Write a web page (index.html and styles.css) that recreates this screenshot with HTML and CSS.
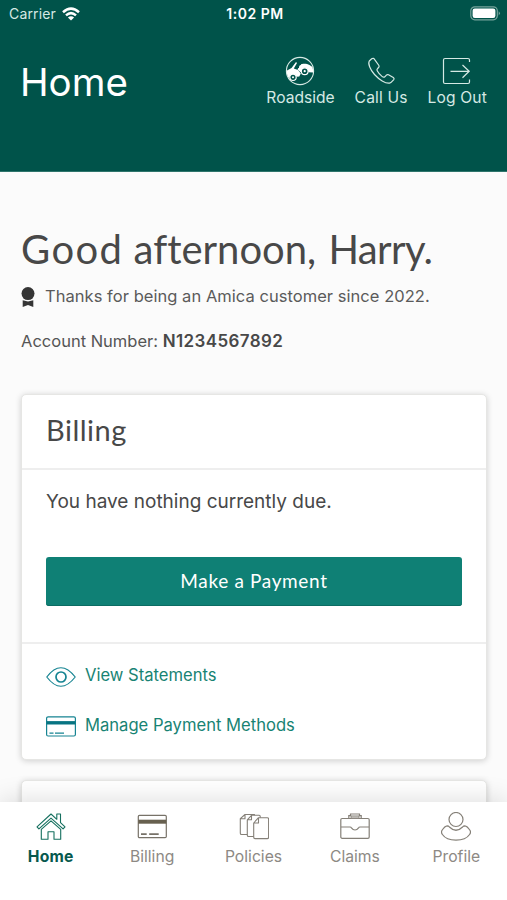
FILE: index.html
```html
<!DOCTYPE html>
<html lang="en">
<head>
<meta charset="utf-8">
<meta name="viewport" content="width=device-width, initial-scale=1">
<title>Home</title>
<link rel="stylesheet" href="styles.css">
</head>
<body>
<div class="app">
  <header class="header">
    <div class="status">
      <div class="carrier"><span class="carrier-name">Carrier</span>
        <svg class="wifi" width="18" height="14" viewBox="0 0 18 14" fill="none" stroke="#fff" stroke-width="2.500"><path d="M1 5.200Q9-2 17 5.200M4 8.400q5-4.500 10 0"/><path d="M9 13.500 5.900 10.400q3.100-2.300 6.200 0z" fill="#fff" stroke="none"/></svg>
      </div>
      <span class="clock">1:02 PM</span>
      <svg class="battery" width="31" height="15" viewBox="0 0 31 15"><rect x=".8" y=".8" width="26.500" height="13" rx="4" fill="none" stroke="#76a49c" stroke-width="1.200"/><rect x="2.600" y="2.600" width="22.800" height="9.400" rx="2.200" fill="#fff"/><path d="M28.700 5.200q2.400 2.100 0 4.300z" fill="#76a49c"/></svg>
    </div>
    <div class="topbar">
      <h1 class="title">Home</h1>
      <nav class="actions">
        <a class="action roadside">
          <svg width="30" height="30" viewBox="0 0 30 30"><circle cx="15" cy="15" r="13.600" fill="none" stroke="#d5e9e4" stroke-width="1.100"/><path d="M2 14.500 6.500 12 11 6l1 1-3.200 5.500 4.200 1.400 2.800 3.600-1.500 3-2.500.2a4 4 0 0 0-7.500 1.800C2.400 20.500 1.500 17.500 2 14.500z" fill="#fff"/><path d="M12.500 13.500l2.500-4.500c3-2 7-1 9.500 0l3 2 1 5.500-4.800-.2a4.300 4.300 0 0 0-8-.1z" fill="#fff"/><path d="M13.500 12V7.800l2.500 1" fill="none" stroke="#00534a"/><circle cx="8" cy="21.300" r="3.200" fill="#00534a" stroke="#fff" stroke-width="1.200"/><circle cx="8" cy="21.300" r="1" fill="#fff"/><circle cx="19.700" cy="15.200" r="3.400" fill="#00534a" stroke="#fff" stroke-width="1.200"/><circle cx="19.700" cy="15.200" r="1.100" fill="#fff"/></svg>
          <span>Roadside</span>
        </a>
        <a class="action call">
          <svg width="30" height="30" viewBox="0 0 30 30" fill="none" stroke="#d5e9e4" stroke-width="1.200" stroke-linejoin="round"><path d="M5.700 2.800 3.300 5C1.700 7.500 4 13.500 8.500 18.500s11 9.200 15 8.600c1.500-.3 3-2 4.300-3.500.5-.8.2-1.500-.5-2l-4.800-2.800c-.8-.4-1.500-.2-2.100.4l-1.600 1.600c-.8.700-1.800.4-2.800-.4-2.100-1.700-3.800-3.700-4.800-5.600-.5-1-.3-1.700.4-2.300l1-1c.6-.6.700-1.200.3-2L8.700 3.600c-.8-1.400-1.800-1.700-3-.8z"/></svg>
          <span>Call Us</span>
        </a>
        <a class="action logout">
          <svg width="30" height="30" viewBox="0 0 30 30" fill="none" stroke="#d5e9e4" stroke-width="1.200"><path d="M27.500 6V4q0-1.500-1.500-1.500H3Q1.500 2.500 1.500 4v22Q1.500 27.500 3 27.500h23q1.500 0 1.500-1.500v-2.500M8.500 15.300H27M20.500 9l6.700 6.300-6.700 6.400"/></svg>
          <span>Log Out</span>
        </a>
      </nav>
    </div>
  </header>
  <main class="content">
    <h2 class="greeting"><span class="salute">Good</span> <span class="daypart">afternoon,</span> <span class="name">Harry.</span></h2>
    <p class="thanks"><svg width="14" height="20" viewBox="0 0 14 20" fill="#353535"><circle cx="7" cy="6.600" r="6.500"/><path d="M1.700 13.300 7 14.500l5.300-1.200V20L7 18l-5.300 2z"/></svg><span class="thanks-text">Thanks for being an Amica customer since 2022.</span></p>
    <p class="account"><span class="acct-label">Account Number:</span> <b class="acct-num">N1234567892</b></p>
    <section class="card">
      <h3 class="card-title"><span>Billing</span></h3>
      <div class="card-body">
        <p class="due">You have nothing currently due.</p>
        <button class="pay"><span>Make a Payment</span></button>
      </div>
      <div class="links">
        <a class="link statements"><svg width="30" height="20" viewBox="0 0 30 20" fill="none" stroke="#168492"><path d="M.8 10Q14.800-8.500 29.200 10 14.800 28.500.8 10z" stroke-width="1.200"/><circle cx="15" cy="10" r="5" stroke-width="1.700"/></svg><span>View Statements</span></a>
        <a class="link methods"><svg width="30" height="21" viewBox="0 0 30 21" fill="none" stroke="#168492"><rect x=".6" y=".8" width="28.800" height="19.200" rx="1.500" stroke-width="1.200"/><path d="M.6 6.800h28.800" stroke-width="3.400" stroke="#087482"/><path d="M3.500 17.200h4M9 17.200h9" stroke-width="1.300"/></svg><span>Manage Payment Methods</span></a>
      </div>
    </section>
    <section class="card next"></section>
  </main>
  <nav class="tabs">
    <a class="tab active home"><svg width="30" height="30" viewBox="0 0 30 30" fill="none" stroke="#16705f" stroke-width="1.100" stroke-linejoin="round"><path d="M15 2 1 14.800l1.900 2.100L15 6.100l12.100 10.800 1.900-2.100-4.500-4.200V2h-3.700v5.300z"/><path d="M5.300 17.300v9.900h6.700v-7.500h6v7.500h6.700v-9.900L15 8.800z"/></svg><span>Home</span></a>
    <a class="tab billing"><svg width="30" height="30" viewBox="0 0 30 30" fill="none" stroke="#777268"><rect x="1.300" y="3.300" width="28" height="22.300" rx="1.200" stroke-width="1.200"/><path d="M1.300 9.700h28" stroke-width="4" stroke="#67604f"/><path d="M4 22.200h5.700M12.200 22.200h9.500" stroke-width="1.700"/></svg><span>Billing</span></a>
    <a class="tab policies"><svg width="30" height="30" viewBox="0 0 30 30" fill="#fff" stroke="#858078" stroke-width="1.100" stroke-linejoin="round"><path d="M6 2.500h9.500v20H2.600q-1.300 0-1.300-1.300V6.700zM6 2.500v4.200H1.300"/><path d="M12.500 3.300h7.700q1 0 1 1v20.200H9.600q-1.300 0-1.300-1.300V7.800zM12.500 3.300v4.500H8.300"/><path d="M19.500 5.700h8.800q1.300 0 1.300 1.300v18.300q0 1.300-1.300 1.300H16q-1.300 0-1.300-1.300V11zM19.500 5.700V11h-4.800"/></svg><span>Policies</span></a>
    <a class="tab claims"><svg width="30" height="30" viewBox="0 0 30 30" fill="none" stroke="#858078" stroke-width="1.200"><rect x=".8" y="6.500" width="28.400" height="19.800" rx="1.300"/><path d="M8.800 6.500V3.700h1.700V2h9v1.700h1.700v2.800"/><path d="M11 6.300V3.900h8v2.400z" fill="#c9c6c2" stroke-width=".8"/><path d="M1 15h9q1 0 1.700 1.200 1.200 1.800 3.300 1.800t3.300-1.800Q19 15 20 15h9"/></svg><span>Claims</span></a>
    <a class="tab profile"><svg width="30" height="30" viewBox="0 0 30 30" fill="none" stroke="#858078" stroke-width="1.200"><circle cx="15" cy="7.500" r="7"/><path d="M6.200 13.800C4 14 2.500 16 .9 18.500c-.6 1.200-.4 2.800.5 4C6.500 30 23.500 30 28.600 22.500c.9-1.200 1.100-2.800.5-4-1.600-2.500-3.100-4.500-5.300-4.700q-1.300 0-2.200 1.200-6.600 6.500-13.200 0-.9-1.200-2.200-1.200z"/></svg><span>Profile</span></a>
  </nav>
</div>
</body>
</html>
```
FILE: styles.css
```css
* { box-sizing: border-box; }
body, h1, h2, h3, p { margin: 0; font-weight: 400; }
body { font-family: Inter, "Liberation Sans", sans-serif; color: #484848; background: #fbfbfb; }
svg { display: block; flex: none; }
.app { height: 900px; overflow: hidden; display: flex; flex-direction: column; white-space: nowrap; }

.header { height: 172px; flex: none; background: #00534a; color: #fff; border-bottom: 1px solid #2f756c; }
.status { height: 27px; display: grid; grid-template-columns: 1fr auto 1fr; align-items: center; padding: 0 6px 0 9px; }
.carrier { display: flex; align-items: center; gap: 6px; font-size: 14px; color: #d5e9e4; letter-spacing: .15px; }
.clock { font-size: 14px; font-weight: 600; letter-spacing: .55px; }
.battery { justify-self: end; }
.topbar { display: flex; justify-content: space-between; padding: 29px 20px 0; }
.title { font-size: 38.500px; line-height: 53px; }
.actions { display: flex; gap: 20px; }
.action { display: flex; flex-direction: column; align-items: center; color: #d5e9e4; font-size: 15.600px; line-height: 23px; }
.call, .logout { letter-spacing: .15px; }

.content { flex: 1; min-height: 0; overflow: hidden; padding: 52px 20px 0 21px; }
.greeting { font-family: Lato, sans-serif; font-size: 40px; line-height: 50px; font-variant-ligatures: none; }
.salute { letter-spacing: 1.400px; }
.daypart { letter-spacing: 0; }
.name { margin-left: 2px; letter-spacing: -.6px; }
.thanks { margin-top: 11px; display: flex; align-items: center; gap: 10px; height: 22px; font-size: 16.500px; letter-spacing: .04px; color: #5a5a5a; }
.thanks svg { margin: 2px 0 0; }
.account { margin-top: 23px; height: 22px; line-height: 22px; font-size: 16.500px; color: #555; }
.acct-num { font-size: 17px; font-weight: 600; letter-spacing: .4px; color: #484848; }

.card { margin-top: 42px; height: 366px; background: #fff; border: 1px solid #e6e6e4; border-radius: 5px; box-shadow: 0 1px 6px rgba(0,0,0,.18); }
.card-title { height: 75px; padding: 10px 25px 0 24px; font-family: Lato, sans-serif; font-size: 29px; line-height: 50px; letter-spacing: .5px; border-bottom: 2px solid #eee; }
.card-body { height: 174px; padding: 19px 24px 0; border-bottom: 2px solid #eee; }
.due { font-size: 19px; line-height: 26px; }
.pay { display: block; width: 100%; height: 49px; margin-top: 42px; padding: 0 0 2px; border: 0; border-radius: 3px; background: #0f8075; color: #fff; font-family: Lato, sans-serif; font-size: 19px; letter-spacing: .65px; box-shadow: inset 0 -1px #0b6c63; }
.links { padding: 19px 24px 0; display: flex; flex-direction: column; gap: 26px; }
.link { display: flex; align-items: center; gap: 9px; height: 24px; font-size: 16.600px; color: #188373; }
.link svg { margin-top: 3px; }
.next { margin-top: 20px; }

.tabs { position: relative; flex: none; height: 98px; display: flex; background: #fff; padding-top: 10px; box-shadow: 0 -2px 24px rgba(0,0,0,.13); }
.tab { flex: 1; display: flex; flex-direction: column; align-items: center; gap: 4px; font-size: 15.700px; line-height: 22px; color: #8d8984; }
.active { font-weight: 700; color: #07594e; letter-spacing: .2px; }
```
